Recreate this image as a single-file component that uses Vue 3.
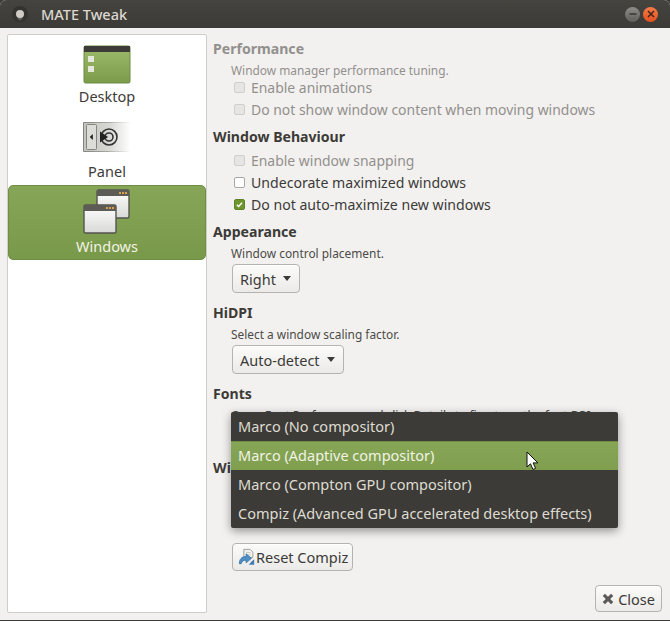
<script setup>
const menu = [
  { label: 'Marco (No compositor)' },
  { label: 'Marco (Adaptive compositor)', active: true },
  { label: 'Marco (Compton GPU compositor)' },
  { label: 'Compiz (Advanced GPU accelerated desktop effects)' },
]
</script>

<template>
  <div class="window">
    <header class="titlebar">
      <span class="wm-menu"><i class="wm-dot"></i></span>
      <span class="title">MATE Tweak</span>
      <span class="spacer"></span>
      <span class="wm-btn min"><svg width="10" height="10" viewBox="0 0 10 10"><path d="M1.500 5h7" stroke="#3a3935" stroke-width="1.4"/></svg></span>
      <span class="wm-btn close"><svg width="10" height="10" viewBox="0 0 10 10"><path d="M2 2l6 6M8 2l-6 6" stroke="#43241a" stroke-width="1.5"/></svg></span>
    </header>
    <div class="body">
      <nav class="sidebar">
        <div class="nav-item">
          <svg class="nav-icon" width="48" height="40" viewBox="0 0 48 40">
            <defs>
              <linearGradient id="g1" x1="0" y1="0" x2="0" y2="1"><stop offset="0" stop-color="#9dbb6c"/><stop offset="1" stop-color="#7b9c4a"/></linearGradient>
            </defs>
            <rect x="1" y="1" width="46" height="37" rx="1.5" fill="url(#g1)" stroke="#6d8a44" stroke-width="1"/>
            <rect x="1" y="1" width="46" height="6" fill="#3c3b37"/>
            <rect x="5" y="11" width="6" height="6" fill="#e4e8da"/>
            <rect x="5" y="21" width="6" height="6" fill="#e4e8da"/>
          </svg>
          <span>Desktop</span>
        </div>
        <div class="nav-item panel">
          <svg class="nav-icon" width="48" height="32" viewBox="0 0 48 32">
            <defs>
              <linearGradient id="g2" x1="0" y1="0" x2="1" y2="0"><stop offset="0" stop-color="#c2c2bf"/><stop offset="0.55" stop-color="#d8d8d5"/><stop offset="1" stop-color="#ffffff"/></linearGradient>
              <linearGradient id="g2s" gradientUnits="userSpaceOnUse" x1="0" y1="0" x2="48" y2="0"><stop offset="0" stop-color="#85857f"/><stop offset="0.5" stop-color="#a5a5a1"/><stop offset="1" stop-color="#ffffff"/></linearGradient>
            </defs>
            <rect x="0.5" y="1.5" width="47" height="29" fill="url(#g2)"/>
            <path d="M48 1.500H.5v29H48" fill="none" stroke="url(#g2s)"/>
            <rect x="3.5" y="3.5" width="10" height="25" rx="1" fill="#dcdcd8" stroke="#85857f"/>
            <path d="M9.800 13l-3 3 3 3z" fill="#1c1c1c"/>
            <circle cx="26" cy="16" r="8" fill="none" stroke="#333" stroke-width="1.6"/>
            <circle cx="26" cy="16" r="4" fill="none" stroke="#333" stroke-width="1.6"/>
            <path d="M17 10.500l8 5.500-8 5.500z" fill="#222"/>
          </svg>
          <span>Panel</span>
        </div>
        <div class="nav-item active">
          <svg class="nav-icon" width="48" height="46" viewBox="0 0 48 46">
            <defs>
              <linearGradient id="g3" x1="0" y1="0" x2="0" y2="1"><stop offset="0" stop-color="#ffffff"/><stop offset="1" stop-color="#d8d8d6"/></linearGradient>
            </defs>
            <rect x="14" y="1" width="32" height="28" rx="1.5" fill="url(#g3)" stroke="#54534f" stroke-width="1.4"/>
            <rect x="14" y="1" width="32" height="6" fill="#5c5b56"/>
            <path d="M36 3h2v2h-2zM39 3h2v2h-2zM42 3h2v2h-2z" fill="#d9a24f"/>
            <rect x="1" y="16" width="32" height="28" rx="1.5" fill="url(#g3)" stroke="#54534f" stroke-width="1.4"/>
            <rect x="1" y="16" width="32" height="6" fill="#5c5b56"/>
            <path d="M23 18h2v2h-2zM26 18h2v2h-2zM29 18h2v2h-2z" fill="#d9a24f"/>
          </svg>
          <span>Windows</span>
        </div>
      </nav>

      <main class="content">
        <h3 class="disabled-h">Performance</h3>
        <p class="desc disabled tight">Window manager performance tuning.</p>
        <label class="check disabled"><i class="box dis"></i>Enable animations</label>
        <label class="check disabled"><i class="box dis"></i>Do not show window content when moving windows</label>

        <h3 class="gap">Window Behaviour</h3>
        <label class="check disabled first"><i class="box dis"></i>Enable window snapping</label>
        <label class="check"><i class="box"></i>Undecorate maximized windows</label>
        <label class="check"><i class="box on"><svg width="11" height="11" viewBox="0 0 12 12"><path d="M2.500 6.200l2.400 2.400 4.400-5" fill="none" stroke="#fff" stroke-width="1.8"/></svg></i>Do not auto-maximize new windows</label>

        <h3 class="gap3">Appearance</h3>
        <p class="desc">Window control placement.</p>
        <button class="btn drop">Right<i class="caret"></i></button>

        <h3 class="gap2">HiDPI</h3>
        <p class="desc">Select a window scaling factor.</p>
        <button class="btn drop">Auto-detect<i class="caret"></i></button>

        <h3 class="gap2">Fonts</h3>
        <p class="desc">Open Font Preferences and click Details to fine-tune the font DPI.</p>

        <h3 class="wm">Window Manager</h3>
        <button class="btn reset">
          <svg width="18" height="18" viewBox="0 0 20 20">
            <path d="M6.500 1.500h7l3 3v6h-10z" fill="#f1f1ef" stroke="#9a9a96"/>
            <path d="M9 5h5M9 7.500h5" stroke="#c4c4c0"/>
            <path d="M1.500 17.500c0-5 2.500-8 7.500-8V6.500l6 5-6 5v-3c-3 0-4.500 1-5.500 4z" fill="#4f8fc6" stroke="#2f6ba0" stroke-width=".8"/>
            <path d="M12 18.500h6v-6l-3 2.500z" fill="#3f7db4"/>
          </svg>
          <span>Reset Compiz</span>
        </button>
      </main>

      <button class="btn closebtn">
        <svg width="14" height="14" viewBox="0 0 16 16"><path d="M2 4.500L4.500 2 8 5.500 11.500 2 14 4.500 10.500 8 14 11.500 11.500 14 8 10.500 4.500 14 2 11.500 5.500 8z" fill="#5a5955"/></svg>
        <span>Close</span>
      </button>

      <ul class="menu">
        <li v-for="m in menu" :key="m.label" :class="{ hot: m.active }">{{ m.label }}</li>
      </ul>
      <svg class="cursor" width="14" height="20" viewBox="0 0 14 20">
        <path d="M1 1v15l3.500-3.200 2.500 5.700 2.600-1.200-2.500-5.400h4.800z" fill="#fff" stroke="#111" stroke-width="1"/>
      </svg>
    </div>
  </div>
</template>

<style>
html, body { margin: 0; background: #3c3b37; }
</style>

<style scoped>
.window {
  width: 670px; height: 621px; overflow: hidden;
  display: flex; flex-direction: column;
  font-family: "Noto Sans", "Open Sans", sans-serif;
  font-size: 14.5px; color: #3c3b37;
  border-radius: 6px 6px 0 0;
  background: #f2f1f0;
}
.titlebar {
  height: 28px; flex: none;
  display: flex; align-items: center;
  background: linear-gradient(#45443f, #3b3a36);
  color: #dcd8cf; padding: 0 3px 0 12px;
}
.wm-menu { width: 16px; height: 16px; border-radius: 50%; background: #34332f; display: flex; align-items: center; justify-content: center; }
.wm-dot { width: 8px; height: 8px; border-radius: 50%; background: #cfccc5; box-shadow: 0 4px 2px -2px #77756f; }
.title { margin-left: 13px; font-size: 14.5px; font-weight: 500; }
.spacer { flex: 1; }
.wm-btn { width: 15px; height: 15px; border-radius: 50%; display: flex; align-items: center; justify-content: center; margin-right: 3px; }
.wm-btn.min { background: linear-gradient(#8e8d88, #5f5e5a); }
.wm-btn.close { background: linear-gradient(#f47c47, #e2501f); margin-right: 9px; }

.body { flex: 1; position: relative; display: flex; padding: 6px 0 7px 7px; border-bottom: 1px solid #3c3b37; min-height: 0; }

.sidebar {
  width: 198px; flex: none; background: #fff; border: 1px solid #cfcdca;
  border-radius: 2px;
}
.nav-item {
  height: 75px; box-sizing: border-box;
  display: flex; flex-direction: column; align-items: center; justify-content: flex-end;
  padding-bottom: 4px; color: #3c3b37; font-size: 14.5px; line-height: 20px;
}
.nav-item .nav-icon { flex: none; margin-bottom: auto; margin-top: 10px; }
.nav-item.panel .nav-icon { margin-top: 11px; }
.nav-item.active {
  background: linear-gradient(#87a556, #79994a);
  color: #f1f3e4; border: 1px solid #6f8e45; border-radius: 5px;
  padding-bottom: 3px;
}
.nav-item.active .nav-icon { margin-top: 3px; }

.content { flex: 1; padding: 5px 0 0 6px; min-width: 0; }
h3 { margin: 0 0 -1px; padding-top: 1px; font-size: 14.1px; font-weight: 700; line-height: 18px; color: #3c3b37; }
h3.disabled-h { color: #92908c; }
h3.gap { margin-top: 7px; }
h3.gap3 { margin-top: 7px; }
h3.gap2 { margin-top: 10px; }
h3.wm { margin-top: 35px; white-space: nowrap; }
.desc { margin: 5px 0 0 18px; font-size: 11.9px; line-height: 16px; color: #4c4b47; white-space: nowrap; }
.desc.disabled { color: #92908c; }
.desc.tight { margin-bottom: -2px; }
.check { display: flex; align-items: center; height: 22px; margin-left: 21px; font-size: 14.1px; white-space: nowrap; color: #3c3b37; }
.check.disabled { color: #92908c; font-size: 13.95px; }
.check.first { margin-top: 4px; }
.box {
  width: 9px; height: 9px; border: 1px solid #a8a7a3; border-radius: 2px; margin-right: 6px;
  background: #fff; flex: none; display: flex; align-items: center; justify-content: center;
}
.box.dis { background: #e6e5e3; border-color: #cfcecb; }
.box.on { background: #6f952f; border-color: #5f8227; }
.btn {
  display: inline-flex; align-items: center; font: inherit; color: #3c3b37;
  border: 1px solid #b5b3af; border-radius: 4px;
  background: linear-gradient(#fbfbfa, #ebeae8);
  box-shadow: 0 1px 0 #fff inset;
  padding: 0 7px; box-sizing: border-box;
}
.drop { height: 29px; margin: 3px 0 0 19px; padding-right: 8px; }
.caret { width: 0; height: 0; border: 4px solid transparent; border-top: 5px solid #3c3b37; border-bottom: 0; margin-left: 7px; }
.reset { height: 28px; margin: 67px 0 0 19px; padding: 0 4px 0 5px; }
.reset svg { flex: none; }
.closebtn { position: absolute; right: 8px; bottom: 8px; height: 27px; padding: 0 6px 0 5px; }
.closebtn svg { margin-right: 3px; }

.menu {
  position: absolute; left: 231px; top: 384px; width: 387px; margin: 0; padding: 0; list-style: none;
  background: #3c3b37; color: #dfdbd2; border-radius: 2px;
  box-shadow: 0 3px 10px rgba(0,0,0,.4);
}
.menu li { height: 29px; line-height: 29px; padding-left: 7px; white-space: nowrap; }
.menu li.hot { background: linear-gradient(#87a556, #7f9f4f); color: #f1f3e4; box-shadow: 0 1px 0 #6f8e45 inset; }
.cursor { position: absolute; left: 526px; top: 423px; }
</style>
